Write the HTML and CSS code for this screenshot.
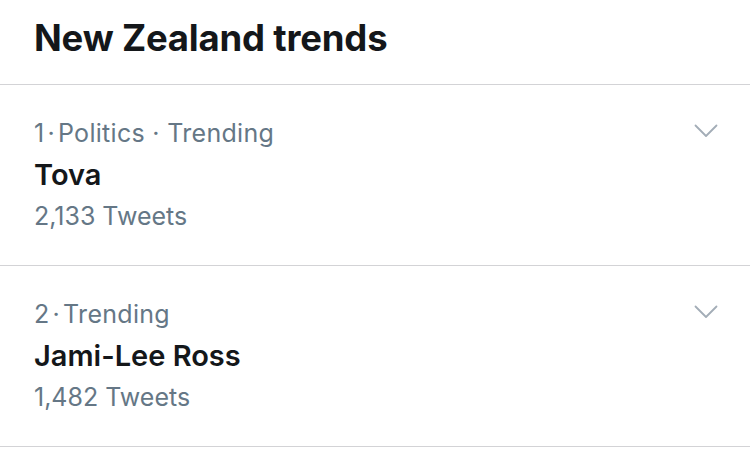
FILE: index.html
```html
<!DOCTYPE html>
<html>
<head>
<meta charset="utf-8">
<link rel="stylesheet" href="styles.css">
</head>
<body>
<div class="panel">
  <div class="header"><h1 class="title">New Zealand trends</h1></div>
  <div class="trend">
    <div class="trend-body">
      <div class="meta">1<span class="dot">·</span>Politics · Trending</div>
      <div class="name">Tova</div>
      <div class="count">2,133 Tweets</div>
    </div>
    <svg class="chevron" viewBox="0 0 24 14" width="24" height="14"><path d="M1.5 1.5 L12 12 L22.5 1.5" fill="none" stroke="#a3adb7" stroke-width="1.8" stroke-linecap="round" stroke-linejoin="round"/></svg>
  </div>
  <div class="trend">
    <div class="trend-body">
      <div class="meta">2<span class="dot">·</span>Trending</div>
      <div class="name">Jami-Lee Ross</div>
      <div class="count">1,482 Tweets</div>
    </div>
    <svg class="chevron" viewBox="0 0 24 14" width="24" height="14"><path d="M1.5 1.5 L12 12 L22.5 1.5" fill="none" stroke="#a3adb7" stroke-width="1.8" stroke-linecap="round" stroke-linejoin="round"/></svg>
  </div>
</div>
</body>
</html>
```
FILE: styles.css
```css
html, body {
  margin: 0;
  padding: 0;
  background: #ffffff;
}
body {
  font-family: Inter, "Noto Sans", "Liberation Sans", sans-serif;
  width: 750px;
  height: 471px;
  overflow: hidden;
}
.header {
  height: 85px;
  border-bottom: 1.5px solid #d3d3d6;
  box-sizing: border-box;
  padding: 0 34px;
  display: flex;
  align-items: center;
}
.title {
  margin: 0;
  font-size: 36.5px;
  font-weight: 700;
  color: #14171a;
  letter-spacing: -0.2px;
  position: relative;
  top: -4px;
}
.trend {
  height: 181px;
  box-sizing: border-box;
  border-bottom: 1.5px solid #d3d3d6;
  display: flex;
  justify-content: space-between;
  align-items: flex-start;
  padding: 0 32px 0 34px;
}
.trend-body {
  padding-top: 27px;
  display: flex;
  flex-direction: column;
}
.meta, .count {
  font-size: 25px;
  color: #657786;
  line-height: 42px;
}
.meta {
  letter-spacing: 0.3px;
}
.count {
  line-height: 40px;
}
.dot {
  margin: 0 3px;
}
.name {
  font-size: 29px;
  font-weight: 600;
  color: #14171a;
  line-height: 42px;
}
.chevron {
  margin-top: 39px;
}
```
